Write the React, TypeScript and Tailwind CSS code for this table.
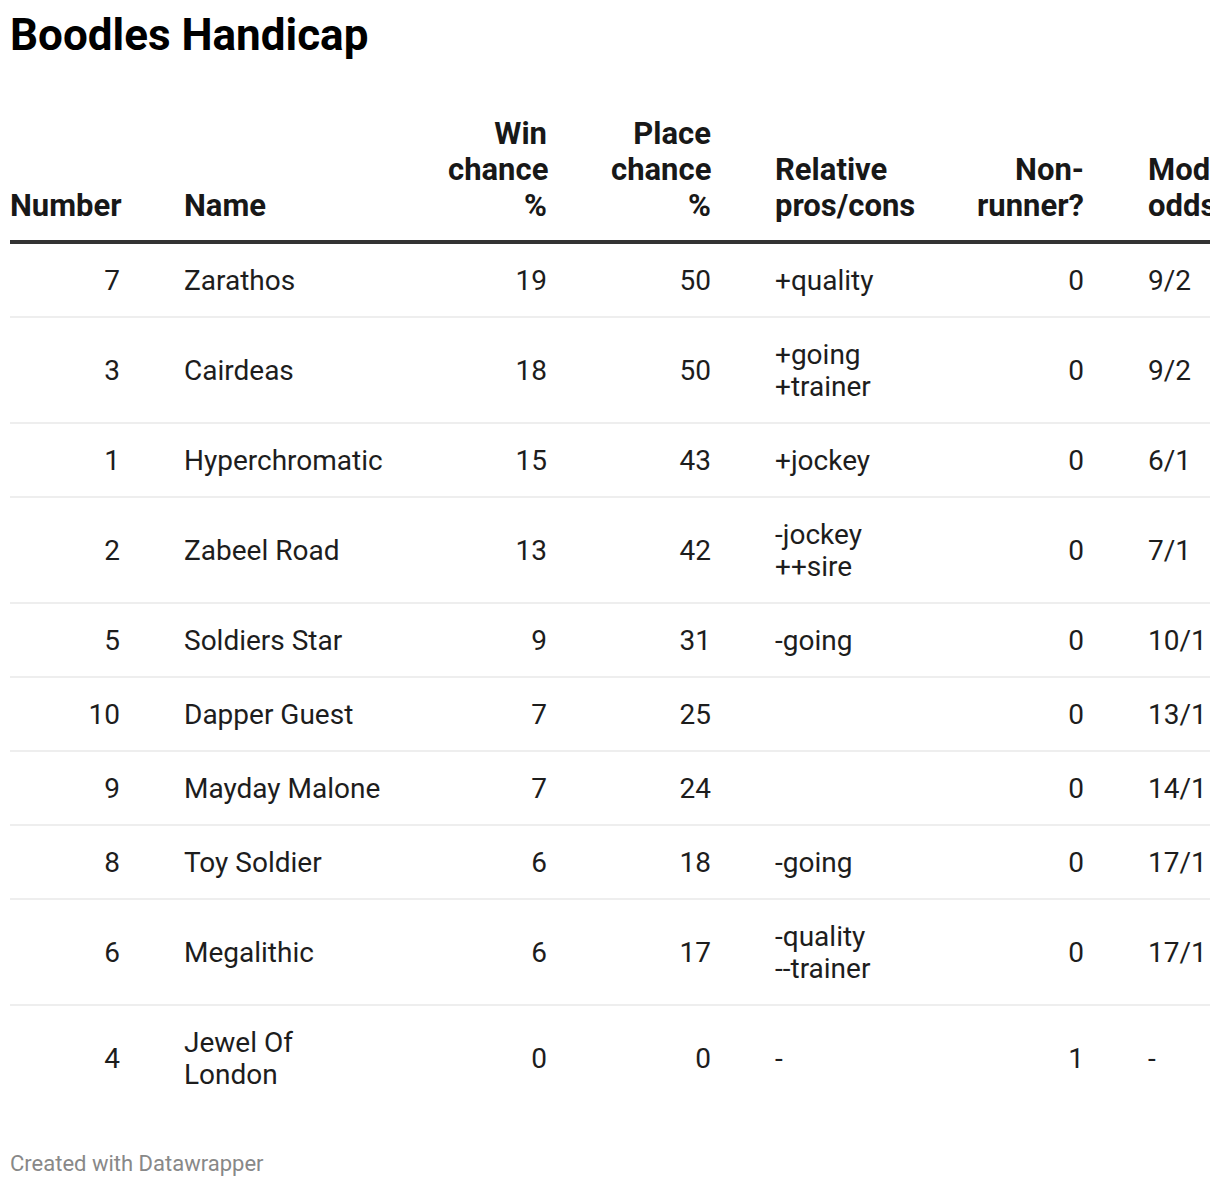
const rows = [
  { n: "7", name: ["Zarathos"], win: "19", place: "50", rel: ["+quality"], nr: "0", odds: "9/2" },
  { n: "3", name: ["Cairdeas"], win: "18", place: "50", rel: ["+going", "+trainer"], nr: "0", odds: "9/2" },
  { n: "1", name: ["Hyperchromatic"], win: "15", place: "43", rel: ["+jockey"], nr: "0", odds: "6/1" },
  { n: "2", name: ["Zabeel Road"], win: "13", place: "42", rel: ["-jockey", "++sire"], nr: "0", odds: "7/1" },
  { n: "5", name: ["Soldiers Star"], win: "9", place: "31", rel: ["-going"], nr: "0", odds: "10/1" },
  { n: "10", name: ["Dapper Guest"], win: "7", place: "25", rel: [], nr: "0", odds: "13/1" },
  { n: "9", name: ["Mayday Malone"], win: "7", place: "24", rel: [], nr: "0", odds: "14/1" },
  { n: "8", name: ["Toy Soldier"], win: "6", place: "18", rel: ["-going"], nr: "0", odds: "17/1" },
  { n: "6", name: ["Megalithic"], win: "6", place: "17", rel: ["-quality", "--trainer"], nr: "0", odds: "17/1" },
  { n: "4", name: ["Jewel Of", "London"], win: "0", place: "0", rel: ["-"], nr: "1", odds: "-" },
];

// table is wider than the frame and gets clipped on the right, like the original embed
const cols = "grid grid-cols-[110px_200px_99px_100px_138px_107px_120px] gap-x-[64px] w-[1300px]";

function Lines({ items }: { items: string[] }) {
  return (
    <div>
      {items.map((t) => (
        <div key={t}>{t}</div>
      ))}
    </div>
  );
}

export default function App() {
  return (
    <div className="bg-white px-[10px] pt-[8px] pb-[10px] text-[#1d1d1d] font-['Roboto',sans-serif]">
      <h1 className="text-[44px] font-bold leading-[54px] text-black">Boodles Handicap</h1>

      <div className="mt-[54px] w-[1200px] overflow-hidden">
        <div className={`${cols} items-end border-b-4 border-[#333] pb-[16px] text-[31px] font-bold leading-[36px] text-[#181818]`}>
          <div>Number</div>
          <div>Name</div>
          <div className="text-right">Win<br />chance<br />%</div>
          <div className="text-right">Place<br />chance<br />%</div>
          <div>Relative<br />pros/cons</div>
          <div className="text-right">Non-<br />runner?</div>
          <div>Model<br />odds</div>
        </div>

        {rows.map((r, i) => (
          <div
            key={r.n}
            className={`${cols} items-center pt-[21px] pb-[19px] text-[28px] leading-[32px] ${
              i < rows.length - 1 ? "border-b-2 border-[#eeeeee]" : ""
            }`}
          >
            <div className="text-right">{r.n}</div>
            <Lines items={r.name} />
            <div className="text-right">{r.win}</div>
            <div className="text-right">{r.place}</div>
            <Lines items={r.rel} />
            <div className="text-right">{r.nr}</div>
            <div>{r.odds}</div>
          </div>
        ))}
      </div>

      <p className="mt-[39px] text-[22px] leading-[30px] text-[#888888]">Created with Datawrapper</p>
    </div>
  );
}
